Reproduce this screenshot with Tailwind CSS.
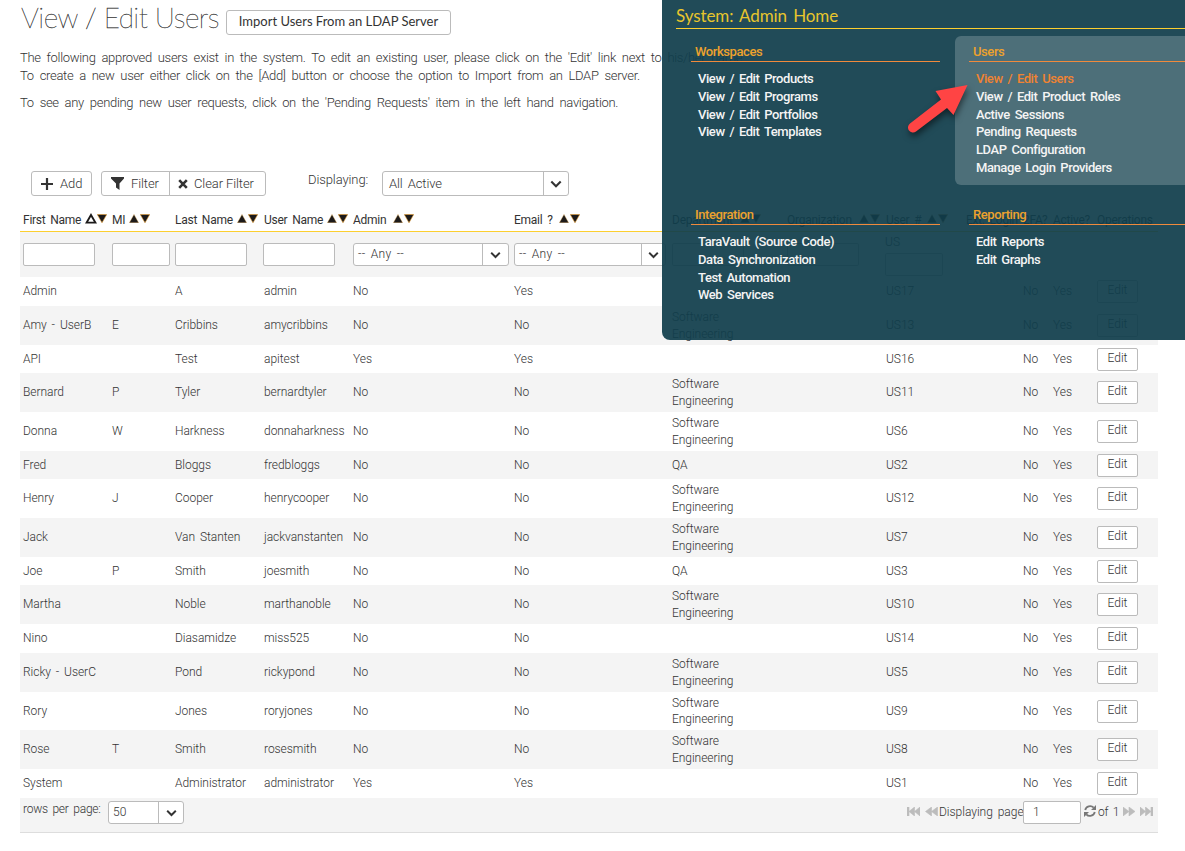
<!DOCTYPE html>
<html lang="en">
<head>
<meta charset="utf-8">
<title>View / Edit Users</title>
<script src="https://cdn.jsdelivr.net/npm/@tailwindcss/browser@4"></script>
</head>
<body class="w-[1185px] h-[851px] overflow-hidden bg-white relative font-[Roboto,sans-serif] font-light text-[12px] text-[#333] [word-spacing:2px]">
<svg class="hidden">
  <symbol id="up" viewBox="0 0 10 9"><path d="M5 .4 9.6 8.8H.4z" fill="#1c1a1a" stroke="#e0a040" stroke-width=".35"/></symbol>
  <symbol id="upo" viewBox="0 0 12 11"><path d="M6 2 10.4 9.6H1.6z" fill="#fff" stroke="#1c1a1a" stroke-width="1.9"/></symbol>
  <symbol id="down" viewBox="0 0 10 9"><path d="M.3 .5H9.7L5 8.8z" fill="#1c1a1a" stroke="#e0982e" stroke-width=".6"/></symbol>
  <symbol id="chev" viewBox="0 0 12 8"><path d="M1.3 1.5 6 6.2l4.700-4.700" fill="none" stroke="#333" stroke-width="2.100"/></symbol>
  <symbol id="back" viewBox="0 0 12 9"><path d="M6 0v9L0 4.500zM12 0v9L6 4.500z" fill="#bcbcbc" stroke="#bcbcbc" stroke-width=".6"/></symbol>
  <symbol id="first" viewBox="0 0 13 9"><path d="M0 0h2v9H0zM7.500 0v9L2 4.500zM13 0v9L7.500 4.500z" fill="#bcbcbc" stroke="#bcbcbc" stroke-width=".6"/></symbol>
</svg>

<main class="pl-5 w-[1158px]">
  <div class="flex h-[49px]">
    <h1 class="font-[Lato,sans-serif] font-thin text-[28px] leading-[34px] tracking-[-.5px] [word-spacing:0px] pl-px w-[206px] whitespace-nowrap [-webkit-text-stroke:.3px_#333]">View / Edit Users</h1>
    <button class="mt-[10px] h-[25px] w-[225px] border border-[#bbb] rounded-[3px] font-[Lato,sans-serif] font-normal text-[13px] leading-[20px] whitespace-nowrap pb-[3px]">Import Users From an LDAP Server</button>
  </div>
  <div class="text-[13px] leading-[18px] whitespace-nowrap tracking-[-.31px] [word-spacing:3px]">
    <p>The following approved users exist in the system. To edit an existing user, please click on the 'Edit' link next to his/her name.</p>
    <p>To create a new user either click on the [Add] button or choose the option to Import from an LDAP server.</p>
    <p class="mt-[9px]">To see any pending new user requests, click on the 'Pending Requests' item in the left hand navigation.</p>
  </div>
  <div class="flex mt-[59px] ml-[11px] h-[25px] text-[13px] leading-[23px] tracking-[-.1px]">
    <button class="w-[61px] border border-[#bbb] rounded-[3px] flex items-center pl-[9px] gap-[7px]"><svg width="12" height="12" viewBox="0 0 12 12"><path d="M6 0v12M0 6h12" stroke="#333" stroke-width="2.200"/></svg>Add</button>
    <button class="ml-[9px] w-[69px] border border-[#bbb] rounded-l-[3px] flex items-center pl-[9px] gap-[7px]"><svg width="13" height="13" viewBox="0 0 13 13"><path d="M0 0h13v1.500L8.500 6.500V13L5 10.500v-4L0 1.500z" fill="#333"/></svg>Filter</button>
    <button class="-ml-px w-[97px] border border-[#bbb] rounded-r-[3px] flex items-center pl-[8px] gap-[6px] whitespace-nowrap"><svg width="10" height="10" viewBox="0 0 10 10"><path d="m1.200 1.200 7.600 7.600m0-7.600L1.200 8.800" stroke="#333" stroke-width="2.600"/></svg>Clear Filter</button>
    <span class="ml-[42px] -mt-[3px] w-[74px]">Displaying:</span>
    <div class="w-[187px] border border-[#bbb] rounded-[3px] flex"><span class="w-[160px] pl-[6px]">All Active</span><span class="flex-1 border-l border-[#bbb] flex items-center justify-center"><svg width="12" height="8"><use href="#chev"/></svg></span></div>
  </div>

  <section class="mt-[11px]">
    <div id="head" class="grid grid-cols-[89px_63px_89px_89px_161px_158px_115px_99px_80px_57px_30px_44px_64px] h-[25px] border-b border-[#fccf2f] text-[12px] leading-[26px] tracking-[-.25px] whitespace-nowrap font-normal text-[#333]"></div>
    <div class="grid grid-cols-[89px_63px_89px_89px_161px_158px_115px_99px_80px_57px_30px_44px_64px] h-[45px] bg-[#f4f4f4] pt-[11px] leading-[20px]">
      <span class="ml-[3px] w-[72px] h-[23px] bg-white border border-[#bbb] rounded-[2px]"></span>
      <span class="ml-[3px] w-[58px] h-[23px] bg-white border border-[#bbb] rounded-[2px]"></span>
      <span class="ml-[3px] w-[72px] h-[23px] bg-white border border-[#bbb] rounded-[2px]"></span>
      <span class="ml-[2px] w-[72px] h-[23px] bg-white border border-[#bbb] rounded-[2px]"></span>
      <span class="ml-[3px] w-[156px] h-[23px] bg-white border border-[#bbb] rounded-[3px] flex"><span class="w-[128px] pl-[4px] tracking-[.3px]">-- Any --</span><span class="flex-1 border-l border-[#bbb] flex items-center justify-center"><svg width="11" height="8"><use href="#chev"/></svg></span></span>
      <span class="ml-[3px] w-[152px] h-[23px] bg-white border border-[#bbb] rounded-[3px] flex"><span class="w-[126px] pl-[4px] tracking-[.3px]">-- Any --</span><span class="flex-1 border-l border-[#bbb] flex items-center justify-center"><svg width="11" height="8"><use href="#chev"/></svg></span></span>
      <span class="ml-[3px] w-[72px] h-[23px] bg-white border border-[#bbb] rounded-[2px]"></span>
      <span class="ml-[3px] w-[72px] h-[23px] bg-white border border-[#bbb] rounded-[2px]"></span>
      <div class="pl-[2px] -mt-[11px]"><div class="leading-[21px]">US</div><div class="w-[58px] h-[23px] bg-white border border-[#bbb] rounded-[2px]"></div></div>
    </div>
    <div id="rows"></div>
    <div class="h-[35px] bg-[#f4f4f4] border-b border-[#ddd] flex pl-[3px] pt-[3px] leading-[23px] whitespace-nowrap">
      <span class="w-[85px] -mt-[3px] tracking-[-.25px]">rows per page:</span>
      <div class="w-[76px] h-[23px] bg-white border border-[#bbb] rounded-[3px] flex leading-[21px]"><span class="w-[49px] pl-[4px]">50</span><span class="flex-1 border-l border-[#bbb] flex items-center justify-center"><svg width="11" height="8"><use href="#chev"/></svg></span></div>
      <svg class="ml-[723px] mt-[6px]" width="13" height="9"><use href="#first"/></svg>
      <svg class="ml-[5px] mt-[6px]" width="13" height="9"><use href="#back"/></svg>
      <span class="ml-[1px] w-[84px] tracking-[-.02px]">Displaying page</span>
      <span class="w-[58px] h-[23px] bg-white border border-[#bbb] rounded-[2px] pl-[9px] leading-[21px]">1</span>
      <svg class="ml-[3px] mt-[4px]" width="12" height="12" viewBox="0 0 12 12"><path d="M1.200 5A5 5 0 0 1 9.700 2.700M10.800 7A5 5 0 0 1 2.300 9.300" fill="none" stroke="#777" stroke-width="1.800"/><path d="M12 0v5H7zM0 12V7h5z" fill="#777"/></svg>
      <span class="ml-[2px] w-[24px] tracking-[-.3px]">of 1</span>
      <svg class="ml-[1px] mt-[6px] rotate-180" width="12" height="9"><use href="#back"/></svg>
      <svg class="ml-[5px] mt-[6px] rotate-180" width="13" height="9"><use href="#first"/></svg>
    </div>
  </section>
</main>

<nav class="absolute left-[662px] top-0 w-[523px] h-[340px] bg-[#103d4b]/93 rounded-bl-[8px] font-medium text-[13px] tracking-[-.42px] text-[#f4f4f4] leading-[17.800px] whitespace-nowrap">
  <h2 class="ml-[14px] h-[29px] border-b border-[#fccf2f] font-[Lato,sans-serif] font-normal text-[17px] leading-[31px] tracking-[-.1px] text-[#e8c52c]">System: Admin Home</h2>
  <div class="flex mt-[7px] h-[149px]">
    <div class="w-[293px] pl-[29px]">
      <h3 class="w-[249px] h-[26px] pl-[4px] leading-[32px] border-b border-[#f08a3c] text-[#eda22d]">Workspaces</h3>
      <ul class="pl-[7px] pt-[8px]"><li>View / Edit Products</li><li>View / Edit Programs</li><li>View / Edit Portfolios</li><li>View / Edit Templates</li></ul>
    </div>
    <div class="flex-1 bg-white/20 rounded-l-[6px] pl-[14px]">
      <h3 class="h-[26px] pl-[4px] leading-[32px] border-b border-[#f08a3c] text-[#eda22d]">Users</h3>
      <ul class="pl-[7px] pt-[8px]"><li class="text-[#f08332]">View / Edit Users</li><li>View / Edit Product Roles</li><li>Active Sessions</li><li>Pending Requests</li><li>LDAP Configuration</li><li>Manage Login Providers</li></ul>
    </div>
  </div>
  <div class="flex mt-[14px]">
    <div class="w-[293px] pl-[29px]">
      <h3 class="w-[249px] h-[26px] pl-[4px] leading-[32px] border-b border-[#f08a3c] text-[#eda22d]">Integration</h3>
      <ul class="pl-[7px] pt-[8px]"><li>TaraVault (Source Code)</li><li>Data Synchronization</li><li>Test Automation</li><li>Web Services</li></ul>
    </div>
    <div class="flex-1 pl-[14px]">
      <h3 class="h-[26px] pl-[4px] leading-[32px] border-b border-[#f08a3c] text-[#eda22d]">Reporting</h3>
      <ul class="pl-[7px] pt-[8px]"><li>Edit Reports</li><li>Edit Graphs</li></ul>
    </div>
  </div>
</nav>
<svg class="absolute left-[900px] top-[78px] drop-shadow-[1px_4px_3px_rgba(0,0,0,0.5)]" width="75" height="60" viewBox="0 0 75 60"><path d="M67.500 7 35.500 13l5.500 8.500L10 45.500a5 5 0 0 0 6 8L47 30l6.500 7z" fill="#ff4444"/></svg>

<script>
const heads = [['First Name',2,68],['MI',1,17],['Last Name',1,62],['User Name',1,63],['Admin',1,40],['Email ?',1,45],['Department',1,68],['Organization',1,72],['User #',1,41],['Ext. Login',0],['2FA?',0],['Active?',0],['Operations',0]];
document.getElementById('head').innerHTML = heads.map(([t, s, w]) =>
  `<div class="pl-[3px] flex"><span ${w ? `style="width:${w}px"` : ''}>${t}</span>` +
  (s ? (s === 2 ? '<svg class="-ml-[6px] mt-[6px]" width="12" height="11"><use href="#upo"/></svg>' : '<svg class="mt-[7px]" width="10" height="9"><use href="#up"/></svg>') +
  (s === 2 ? '<svg class="mt-[7px]" width="10" height="9"><use href="#down"/></svg>' : '<svg class="ml-px mt-[7px]" width="10" height="9"><use href="#down"/></svg>') : '') + '</div>').join('');

const SE = 'Software<br>Engineering';
const users = [
  [29,'Admin','','A','admin','No','Yes','','US17'],
  [39,'Amy - UserB','E','Cribbins','amycribbins','No','No',SE,'US13'],
  [28,'API','','Test','apitest','Yes','Yes','','US16'],
  [39,'Bernard','P','Tyler','bernardtyler','No','No',SE,'US11'],
  [39,'Donna','W','Harkness','donnaharkness','No','No',SE,'US6'],
  [28,'Fred','','Bloggs','fredbloggs','No','No','QA','US2'],
  [39,'Henry','J','Cooper','henrycooper','No','No',SE,'US12'],
  [39,'Jack','','Van Stanten','jackvanstanten','No','No',SE,'US7'],
  [28,'Joe','P','Smith','joesmith','No','No','QA','US3'],
  [39,'Martha','','Noble','marthanoble','No','No',SE,'US10'],
  [29,'Nino','','Diasamidze','miss525','No','No','','US14'],
  [39,'Ricky - UserC','','Pond','rickypond','No','No',SE,'US5'],
  [38,'Rory','','Jones','roryjones','No','No',SE,'US9'],
  [39,'Rose','T','Smith','rosesmith','No','No',SE,'US8'],
  [29,'System','','Administrator','administrator','Yes','Yes','','US1']];
document.getElementById('rows').innerHTML = users.map(([h, ...c]) =>
  `<div class="grid grid-cols-[89px_63px_89px_89px_161px_158px_115px_99px_80px_57px_30px_44px_64px] items-center odd:bg-white even:bg-[#f4f4f4] leading-[16.500px] tracking-[-.04px] whitespace-nowrap" style="height:${h}px">` +
  [...c.slice(0, 7), '', c[7], '', 'No', 'Yes'].map(t => `<div class="pl-[3px]">${t}</div>`).join('') +
  '<div class="pl-[3px]"><button class="block w-[41px] h-[23px] bg-white border border-[#bbb] rounded-[2px] leading-[18px] pb-[3px]">Edit</button></div></div>').join('');
</script>
</body>
</html>
